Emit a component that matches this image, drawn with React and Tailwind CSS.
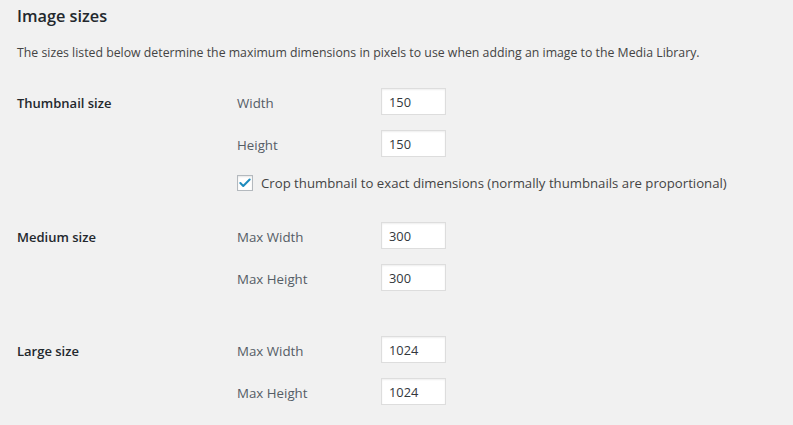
import { Check } from 'lucide-react';

const font = { fontFamily: '"Open Sans", "Noto Sans", sans-serif' };

function Field({ label, value }) {
  return (
    <div className="flex items-center h-[27px]">
      <span className="w-[144px] pt-[4px] text-[13.3px] text-[#555d66]">{label}</span>
      <input
        readOnly
        value={value}
        className="w-[65px] h-[27px] bg-white border border-[#dddddd] shadow-[inset_0_1px_2px_rgba(0,0,0,0.07)] pl-[7px] text-[12.8px] text-[#32373c] outline-none"
      />
    </div>
  );
}

function SizeRow({ title, className, children }) {
  return (
    <div className={`flex ${className}`}>
      <div className="w-[220px] h-[27px] pt-[4px] flex items-center text-[13px] font-semibold text-[#23282d]">
        {title}
      </div>
      <div className="flex flex-col gap-[15px]">{children}</div>
    </div>
  );
}

export default function App() {
  return (
    <div className="min-h-screen bg-[#f1f1f1] pl-[17px] pt-[4px]" style={font}>
      {/* Heading */}
      <h2 className="text-[16.3px] leading-[24px] font-semibold text-[#23282d]">Image sizes</h2>
      <p className="mt-[16px] text-[12.3px] leading-[18px] text-[#444]">
        The sizes listed below determine the maximum dimensions in pixels to use when adding an image to the Media Library.
      </p>

      {/* Thumbnail */}
      <SizeRow title="Thumbnail size" className="mt-[26px]">
        <Field label="Width" value="150" />
        <Field label="Height" value="150" />
        <label className="flex items-center mt-[3px] h-[16px]">
          <span className="w-[16px] h-[16px] shrink-0 bg-white border border-[#b4b9be] shadow-[inset_0_1px_2px_rgba(0,0,0,0.1)] flex items-center justify-center">
            <Check size={14} strokeWidth={3.5} className="text-[#1e8cbe]" />
          </span>
          <span className="ml-[8px] pt-[2px] text-[13.2px] whitespace-nowrap text-[#444]">
            Crop thumbnail to exact dimensions (normally thumbnails are proportional)
          </span>
        </label>
      </SizeRow>

      {/* Medium */}
      <SizeRow title="Medium size" className="mt-[31px]">
        <Field label="Max Width" value="300" />
        <Field label="Max Height" value="300" />
      </SizeRow>

      {/* Large */}
      <SizeRow title="Large size" className="mt-[45px]">
        <Field label="Max Width" value="1024" />
        <Field label="Max Height" value="1024" />
      </SizeRow>
    </div>
  );
}
